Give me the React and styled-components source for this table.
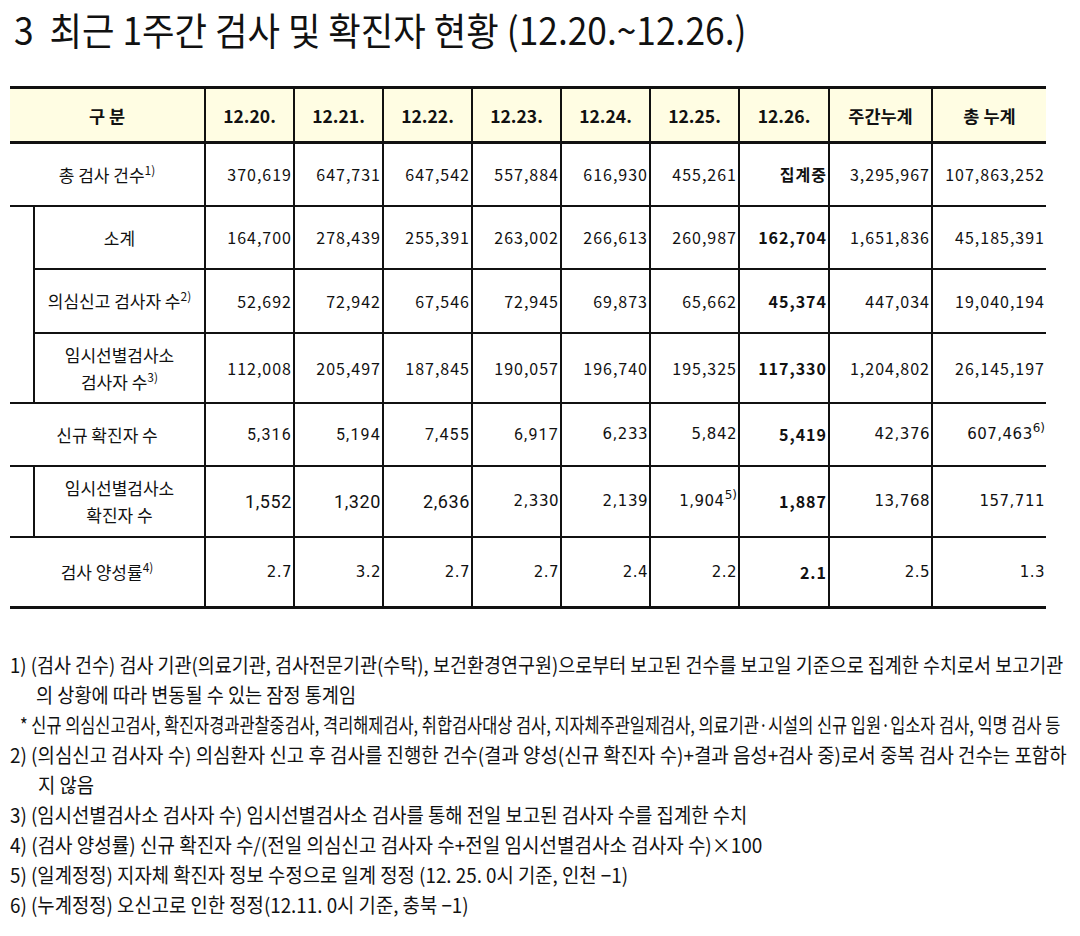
import React from 'react'
import styled, { createGlobalStyle } from 'styled-components';

const GlobalStyle = createGlobalStyle`
  body {
    margin: 0;
    background: #fff;
    color: #111;
    font-family: "Noto Sans CJK KR", "Noto Sans", sans-serif;
  }
`;

const Page = styled.div`
  width: 1080px;
  padding: 0 0 0 10px;
  box-sizing: border-box;
  overflow: hidden;
`;

const Title = styled.h1`
  margin: 0;
  padding: 6px 0 0 4px;
  height: 86px;
  box-sizing: border-box;
  font-size: 38px;
  font-weight: 400;
  line-height: 46px;
`;

const Squeeze = styled.span`
  display: inline-block;
  white-space: nowrap;
  transform-origin: 0 50%;
  transform: scaleX(${props => props.$sx});
`;

const Table = styled.table`
  border-collapse: collapse;
  table-layout: fixed;
  width: 1036px;
  border-top: 3px solid #111;
  border-bottom: 3px solid #111;
`;

const HeadRow = styled.tr`
  height: 55px;
`;

const Th = styled.th`
  background: #fffde3;
  font-size: 17.5px;
  font-weight: 700;
  border-bottom: 3px solid #111;
  border-left: 2px solid #111;
  padding: 0;

  &:first-child {
    border-left: none;
  }
`;

const Row = styled.tr`
  height: ${props => props.$h}px;
`;

const Indent = styled.td`
  border-top: 2px solid #111;
  padding: 0;
`;

const Label = styled.td`
  border-top: 2px solid #111;
  border-left: ${props => props.$sub ? '2px solid #111' : 'none'};
  text-align: center;
  font-size: 17px;
  line-height: 27px;
  padding: 0;
`;

const fonts = {
  noto: '"Noto Sans CJK KR", "Noto Sans", sans-serif',
  roboto: 'Roboto, "Noto Sans CJK KR", sans-serif',
  dejavu: '"DejaVu Sans", "Noto Sans CJK KR", sans-serif',
};

const Num = styled.td`
  border-top: 2px solid #111;
  border-left: 2px solid #111;
  text-align: right;
  padding: 0 1px 0 0;
  font-family: ${props => fonts[props.$font || 'noto']};
  font-size: ${props => props.$size || 16}px;
  font-weight: ${props => props.$bold ? 700 : 400};
  letter-spacing: ${props => props.$ls ?? 1}px;
  white-space: nowrap;
`;

const Sup = styled.sup`
  font-size: 12px;
  line-height: 0;
  letter-spacing: 0;
  vertical-align: 7px;
  font-weight: 400;
`;

const Notes = styled.div`
  margin-top: 41px;
`;

const Note = styled.div`
  height: 30px;
  line-height: 30px;
  font-size: 20px;
  padding-left: ${props => props.$indent || 0}px;
  white-space: nowrap;
`;

const heads = ['12.20.', '12.21.', '12.22.', '12.23.', '12.24.', '12.25.', '12.26.', '주간누계', '총 누계'];

const rows = [
  {
    label: '총 검사 건수', sup: '1)', h: 63,
    values: ['370,619', '647,731', '647,542', '557,884', '616,930', '455,261', '집계중', '3,295,967', '107,863,252'],
  },
  {
    label: '소계', h: 63, group: 3,
    values: ['164,700', '278,439', '255,391', '263,002', '266,613', '260,987', '162,704', '1,651,836', '45,185,391'],
  },
  {
    label: '의심신고 검사자 수', sup: '2)', h: 64, sub: true,
    values: ['52,692', '72,942', '67,546', '72,945', '69,873', '65,662', '45,374', '447,034', '19,040,194'],
  },
  {
    label: ['임시선별검사소', '검사자 수'], sup: '3)', h: 70, sub: true,
    values: ['112,008', '205,497', '187,845', '190,057', '196,740', '195,325', '117,330', '1,204,802', '26,145,197'],
  },
  {
    label: '신규 확진자 수', h: 63,
    font: ['roboto', 'roboto', 'roboto', 'roboto', 'dejavu', 'dejavu', 'noto', 'dejavu', 'dejavu'],
    sizes: [16, 16, 16, 16, 15, 15, 16, 15, 15],
    ls: [1.2, 1.2, 1.2, 1.2, 0.5, 0.5, 1, 0.5, 0.5],
    values: ['5,316', '5,194', '7,455', '6,917', '6,233', '5,842', '5,419', '42,376', ['607,463', '6)']],
  },
  {
    label: ['임시선별검사소', '확진자 수'], h: 71, group: 1,
    font: ['roboto', 'roboto', 'roboto', 'dejavu', 'dejavu', 'dejavu', 'noto', 'dejavu', 'dejavu'],
    sizes: [18, 18, 18, 15, 15, 15, 16, 15, 15],
    ls: [0.6, 0.6, 0.6, 0.5, 0.5, 0.5, 1, 0.5, 0.5],
    values: ['1,552', '1,320', '2,636', '2,330', '2,139', ['1,904', '5)'], '1,887', '13,768', '157,711'],
  },
  {
    label: '검사 양성률', sup: '4)', h: 71,
    font: ['dejavu', 'dejavu', 'dejavu', 'dejavu', 'dejavu', 'dejavu', 'noto', 'dejavu', 'dejavu'],
    sizes: [15, 15, 15, 15, 15, 15, 16, 15, 15],
    ls: [0.5, 0.5, 0.5, 0.5, 0.5, 0.5, 1, 0.5, 0.5],
    values: ['2.7', '3.2', '2.7', '2.7', '2.4', '2.2', '2.1', '2.5', '1.3'],
  },
];

function LabelText({ label, sup }) {
  const lines = Array.isArray(label) ? label : [label];
  return lines.map((line, i) => (
    <React.Fragment key={i}>
      {i > 0 && <br />}
      {line}
      {i === lines.length - 1 && sup && <Sup>{sup}</Sup>}
    </React.Fragment>
  ));
}

function StatRow({ row }) {
  const grouped = row.group || row.sub;
  return (
    <Row $h={row.h}>
      {row.group && <Indent rowSpan={row.group} />}
      <Label colSpan={grouped ? 1 : 2} $sub={grouped}>
        <LabelText label={row.label} sup={row.sup} />
      </Label>
      {row.values.map((v, i) => (
        <Num
          key={i}
          $bold={i === 6}
          $font={row.font && row.font[i]}
          $size={row.sizes && row.sizes[i]}
          $ls={row.ls && row.ls[i]}
        >
          {Array.isArray(v) ? <>{v[0]}<Sup>{v[1]}</Sup></> : v}
        </Num>
      ))}
    </Row>
  );
}

const notes = [
  { text: '1) (검사 건수) 검사 기관(의료기관, 검사전문기관(수탁), 보건환경연구원)으로부터 보고된 건수를 보고일 기준으로 집계한 수치로서 보고기관', sx: 0.924 },
  { text: '의 상황에 따라 변동될 수 있는 잠정 통계임', sx: 0.93, indent: 26 },
  { text: '* 신규 의심신고검사, 확진자경과관찰중검사, 격리해제검사, 취합검사대상 검사, 지자체주관일제검사, 의료기관·시설의 신규 입원·입소자 검사, 익명 검사 등', sx: 0.82, indent: 10 },
  { text: '2) (의심신고 검사자 수) 의심환자 신고 후 검사를 진행한 건수(결과 양성(신규 확진자 수)+결과 음성+검사 중)로서 중복 검사 건수는 포함하', sx: 0.945 },
  { text: '지 않음', sx: 0.94, indent: 28 },
  { text: '3) (임시선별검사소 검사자 수) 임시선별검사소 검사를 통해 전일 보고된 검사자 수를 집계한 수치', sx: 0.94 },
  { text: '4) (검사 양성률) 신규 확진자 수/(전일 의심신고 검사자 수+전일 임시선별검사소 검사자 수)×100', sx: 0.95 },
  { text: '5) (일계정정) 지자체 확진자 정보 수정으로 일계 정정 (12. 25. 0시 기준, 인천 −1)', sx: 0.94 },
  { text: '6) (누계정정) 오신고로 인한 정정(12.11. 0시 기준, 충북 −1)', sx: 0.94 },
];

function App() {
  return (
    <Page>
      <GlobalStyle />
      <Title>
        <Squeeze $sx={0.93}>3&nbsp; 최근 1주간 검사 및 확진자 현황 (12.20.~12.26.)</Squeeze>
      </Title>
      <Table>
        <colgroup>
          <col style={{ width: 24 }} />
          <col style={{ width: 171 }} />
          {[89, 89, 89, 89, 89, 89, 90, 103, 114].map((w, i) => (
            <col key={i} style={{ width: w }} />
          ))}
        </colgroup>
        <thead>
          <HeadRow>
            <Th colSpan={2}>구 분</Th>
            {heads.map(h => <Th key={h}>{h}</Th>)}
          </HeadRow>
        </thead>
        <tbody>
          {rows.map((row, i) => <StatRow key={i} row={row} />)}
        </tbody>
      </Table>
      <Notes>
        {notes.map((n, i) => (
          <Note key={i} $indent={n.indent}>
            <Squeeze $sx={n.sx}>{n.text}</Squeeze>
          </Note>
        ))}
      </Notes>
    </Page>
  )
}

export default App
